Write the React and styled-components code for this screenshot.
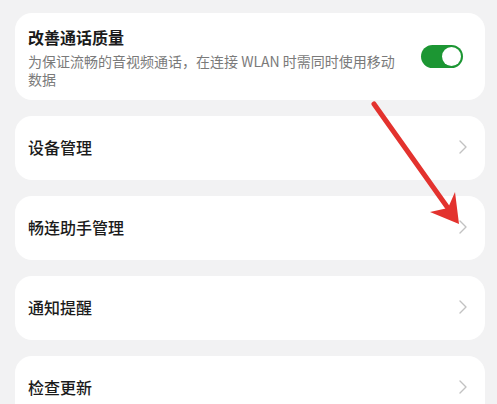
import React from "react";
import styled, { createGlobalStyle } from "styled-components";

const GlobalStyle = createGlobalStyle`
  html, body {
    margin: 0;
    padding: 0;
    background: #f2f2f3;
    font-family: "Noto Sans CJK SC", "Noto Sans", sans-serif;
  }
`;

const Page = styled.div`
  position: relative;
  width: 497px;
  height: 404px;
  overflow: hidden;
  box-sizing: border-box;
  padding: 13px 12px 0 15px;
  display: flex;
  flex-direction: column;
  gap: 16px;
`;

const Card = styled.div`
  background: #fff;
  border-radius: 17px;
  display: flex;
  align-items: center;
  box-sizing: border-box;
  padding: ${(p) => (p.$tall ? "12px 22px 12px 13px" : "0 17px 3px 13px")};
  height: ${(p) => (p.$tall ? "87px" : "64px")};
  flex-shrink: 0;
`;

const TextCol = styled.div`
  flex: 1;
  display: flex;
  flex-direction: column;
  margin-right: 24px;
`;

const Title = styled.div`
  font-size: 16px;
  line-height: 22px;
  font-weight: 700;
  color: #1b1b1b;
`;

const Label = styled.div`
  flex: 1;
  font-size: 16px;
  line-height: 22px;
  font-weight: 500;
  color: #1b1b1b;
`;

const Sub = styled.div`
  margin-top: 4px;
  font-size: 14px;
  line-height: 18px;
  color: #7a7a7a;
`;

const Toggle = styled.div`
  width: 42px;
  height: 23px;
  border-radius: 12px;
  background: #1c9633;
  flex-shrink: 0;
  display: flex;
  align-items: center;
  justify-content: flex-end;
  padding: 0 2px;
  box-sizing: border-box;
`;

const Knob = styled.div`
  width: 19px;
  height: 19px;
  border-radius: 50%;
  background: #fff;
`;

const Arrow = styled.svg`
  position: absolute;
  left: 0;
  top: 0;
  pointer-events: none;
`;

const Chevron = () => (
  <svg width="10" height="16" viewBox="0 0 10 16">
    <path d="M2 2 L8 8 L2 14" fill="none" stroke="#c2c2c2" strokeWidth="1.4" strokeLinecap="round" strokeLinejoin="round" />
  </svg>
);

const rows = ["设备管理", "畅连助手管理", "通知提醒", "检查更新"];

export default function App() {
  return (
    <>
      <GlobalStyle />
      <Page>
        <Card $tall>
          <TextCol>
            <Title>改善通话质量</Title>
            <Sub>为保证流畅的音视频通话，在连接 WLAN 时需同时使用移动数据</Sub>
          </TextCol>
          <Toggle>
            <Knob />
          </Toggle>
        </Card>
        {rows.map((r) => (
          <Card key={r}>
            <Label>{r}</Label>
            <Chevron />
          </Card>
        ))}
        <Arrow width="497" height="404" viewBox="0 0 497 404">
          <path d="M374 104 L455 218" stroke="#e3322e" strokeWidth="5" strokeLinecap="round" fill="none" />
          <path d="M459 224 L455 192 L448 208 L430 212 Z" fill="#e3322e" />
        </Arrow>
      </Page>
    </>
  );
}
